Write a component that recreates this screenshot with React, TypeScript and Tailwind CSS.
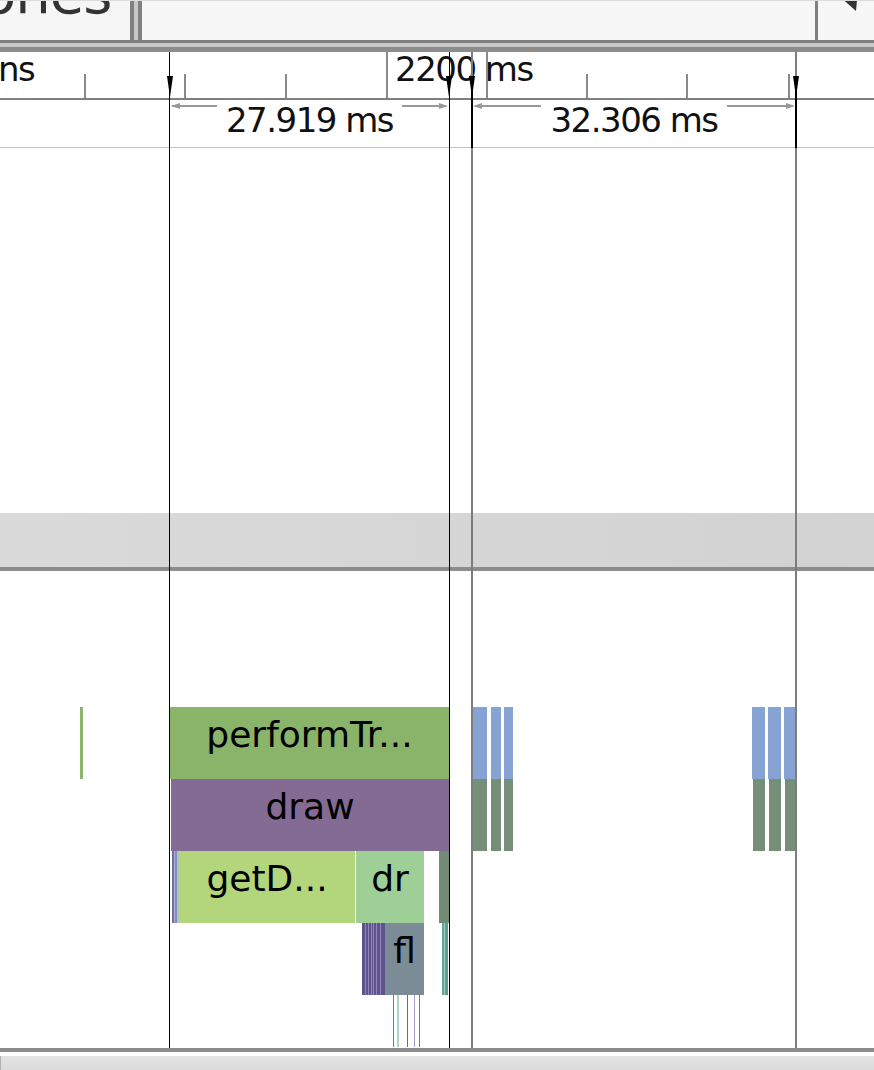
import React from "react";

const FONT = { fontFamily: '"DejaVu Sans", "Liberation Sans", sans-serif' };

const ticks = [
  { x: 85, tall: false },
  { x: 185, tall: false },
  { x: 286, tall: false },
  { x: 387, tall: true },
  { x: 487, tall: true },
  { x: 587, tall: false },
  { x: 687, tall: false },
  { x: 789, tall: false },
];

const markers = [170, 449, 472, 796];

type Bar = { x: number; w: number; top: number; h: number; c: string; label?: string };

const bars: Bar[] = [
  { x: 80, w: 3, top: 136, h: 72, c: "#8ab56b" },
  { x: 170, w: 279, top: 136, h: 72, c: "#89b46a", label: "performTr..." },
  { x: 171, w: 278, top: 208, h: 72, c: "#836b93", label: "draw" },
  // row 3 stripes
  { x: 172, w: 2, top: 280, h: 72, c: "#7b6a9c" },
  { x: 174, w: 1, top: 280, h: 72, c: "#a9b3d6" },
  { x: 175, w: 2, top: 280, h: 72, c: "#7a92c2" },
  { x: 177, w: 2, top: 280, h: 72, c: "#b9c3b0" },
  { x: 179, w: 176, top: 280, h: 72, c: "#b3d67c", label: "getD..." },
  { x: 356, w: 68, top: 280, h: 72, c: "#9ecf97", label: "dr" },
  { x: 439, w: 10, top: 280, h: 72, c: "#728b74" },
  // row 4
  { x: 362, w: 23, top: 352, h: 72, c: "#5f538e" },
  { x: 385, w: 39, top: 352, h: 72, c: "#7b8c96", label: "fl" },
  { x: 442, w: 2, top: 352, h: 72, c: "#6aa39a" },
  { x: 444, w: 1, top: 352, h: 72, c: "#9ccfc0" },
  { x: 445, w: 3, top: 352, h: 72, c: "#5f9c92" },
  // thin lines below
  { x: 393, w: 1, top: 424, h: 52, c: "#7e70b0" },
  { x: 397, w: 2, top: 424, h: 52, c: "#a6d8c4" },
  { x: 407, w: 1, top: 424, h: 52, c: "#6f62a6" },
  { x: 414, w: 1, top: 424, h: 52, c: "#a79ccc" },
  { x: 419, w: 1, top: 424, h: 52, c: "#7e70b0" },
  // right groups blue
  { x: 472, w: 15, top: 136, h: 72, c: "#87a3d3" },
  { x: 491, w: 10, top: 136, h: 72, c: "#87a3d3" },
  { x: 504, w: 9, top: 136, h: 72, c: "#87a3d3" },
  { x: 752, w: 13, top: 136, h: 72, c: "#87a3d3" },
  { x: 768, w: 13, top: 136, h: 72, c: "#87a3d3" },
  { x: 784, w: 12, top: 136, h: 72, c: "#87a3d3" },
  // right groups green
  { x: 472, w: 15, top: 208, h: 72, c: "#768f78" },
  { x: 491, w: 10, top: 208, h: 72, c: "#768f78" },
  { x: 504, w: 9, top: 208, h: 72, c: "#768f78" },
  { x: 753, w: 12, top: 208, h: 72, c: "#768f78" },
  { x: 769, w: 12, top: 208, h: 72, c: "#768f78" },
  { x: 785, w: 11, top: 208, h: 72, c: "#768f78" },
];

function Stripes() {
  const xs = [365, 368, 371, 373, 376, 380];
  return (
    <>
      {xs.map((x) => (
        <div
          key={x}
          className="absolute top-[352px] h-[72px] w-px bg-[#8f86bd]"
          style={{ left: x }}
        />
      ))}
    </>
  );
}

export default function App() {
  return (
    <div className="w-[874px] h-[1070px] overflow-hidden flex flex-col bg-white text-[#111]" style={FONT}>
      {/* Tab bar */}
      <div className="flex h-[40px] border-t border-[#dcdcdc]">
        <div className="w-[130px] bg-[#f6f6f6] overflow-hidden">
          <div className="text-[56px] leading-none mt-[-35px] ml-[-18px] text-[#333] tracking-[-1px] whitespace-nowrap">ones</div>
        </div>
        <div className="w-[4px] bg-[#808080]" />
        <div className="w-[4px] bg-[#c8c8c8]" />
        <div className="w-[4px] bg-[#808080]" />
        <div className="flex-1 bg-[#f7f7f7]" />
        <div className="w-[3px] bg-[#808080]" />
        <div className="w-[56px] bg-[#f7f7f7] relative overflow-hidden">
          <svg className="absolute left-[18px] top-[-12px]" width="24" height="24" viewBox="0 0 24 24">
            <polygon points="2,6 22,0 20,22" fill="#333" />
          </svg>
        </div>
      </div>
      <div className="h-[3px] bg-[#808080]" />
      <div className="h-[4px] bg-[#c8c8c8]" />
      <div className="h-[5px] bg-[#8c8c8c]" />

      {/* Timeline area */}
      <div className="relative flex flex-col h-[996px]">
        {/* Ruler */}
        <div className="relative h-[48px] border-b-[2px] border-[#808080]">
          <span className="absolute left-[-2px] top-[-3px] text-[34px] leading-[40px] tracking-[-1.5px]">ns</span>
          <span className="absolute left-[395px] top-[-3px] text-[34px] leading-[40px] tracking-[-1.5px]">2200 ms</span>
          {ticks.map((t) => (
            <div
              key={t.x}
              className={`absolute bottom-0 w-[2px] bg-[#8a8a8a] ${t.tall ? "h-[48px]" : "h-[24px]"}`}
              style={{ left: t.x - 1 }}
            />
          ))}
        </div>
        {/* Measurements */}
        <div className="relative h-[48px] border-b border-[#c4c4c4]">
          <div className="absolute left-[170px] w-[279px] top-0 h-full flex justify-center">
            <span className="text-[34px] leading-[40px] tracking-[-1.5px]">27.919 ms</span>
          </div>
          <div className="absolute left-[472px] w-[324px] top-0 h-full flex justify-center">
            <span className="text-[34px] leading-[40px] tracking-[-1.5px]">32.306 ms</span>
          </div>
          <svg className="absolute left-0 top-0" width="874" height="20">
            <g stroke="#999" strokeWidth="2">
              <line x1="172" y1="6" x2="217" y2="6" />
              <line x1="402" y1="6" x2="446" y2="6" />
              <line x1="475" y1="6" x2="541" y2="6" />
              <line x1="727" y1="6" x2="793" y2="6" />
            </g>
            <g fill="#999">
              <polygon points="171,6 180,3 180,9" />
              <polygon points="448,6 439,3 439,9" />
              <polygon points="473,6 482,3 482,9" />
              <polygon points="795,6 786,3 786,9" />
            </g>
          </svg>
        </div>
        <div className="h-[365px]" />
        <div className="h-[54px] bg-gradient-to-r from-[#dadada] to-[#d2d2d2]" />
        <div className="h-[4px] bg-[#8c8c8c]" />
        {/* Flame chart */}
        <div className="relative h-[476px]">
          {bars.map((b, i) => (
            <div
              key={i}
              className="absolute flex items-center justify-center overflow-hidden text-[36px] leading-none text-black"
              style={{ left: b.x, width: b.w, top: b.top, height: b.h, background: b.c }}
            >
              {b.label ? <span className="-translate-y-[8px] whitespace-nowrap">{b.label}</span> : null}
            </div>
          ))}
          <Stripes />
        </div>

        {/* Marker overlay */}
        <div className="absolute inset-0 pointer-events-none">
          <div className="absolute top-0 bottom-0 left-[169px] w-px bg-black" />
          <div className="absolute top-0 bottom-0 left-[449px] w-px bg-black" />
          <div className="absolute top-0 bottom-0 left-[471px] w-[2px] bg-[#7d7d7d]" />
          <div className="absolute top-0 bottom-0 left-[795px] w-[2px] bg-[#7d7d7d]" />
          <div className="absolute top-[24px] h-[72px] left-[471px] w-[2px] bg-black" />
          <div className="absolute top-[24px] h-[72px] left-[795px] w-[2px] bg-black" />
          <svg className="absolute left-0 top-[24px]" width="874" height="24">
            {markers.map((x) => (
              <polygon key={x} points={`${x - 3},0 ${x + 3},0 ${x},21`} fill="#000" />
            ))}
          </svg>
        </div>
      </div>

      {/* Bottom scrollbar */}
      <div className="h-[4px] bg-[#8c8c8c]" />
      <div className="h-[4px] bg-white" />
      <div className="flex-1 bg-gradient-to-b from-[#e4e4e4] to-[#dadada] border-l border-[#b0b0b0]" />
    </div>
  );
}
